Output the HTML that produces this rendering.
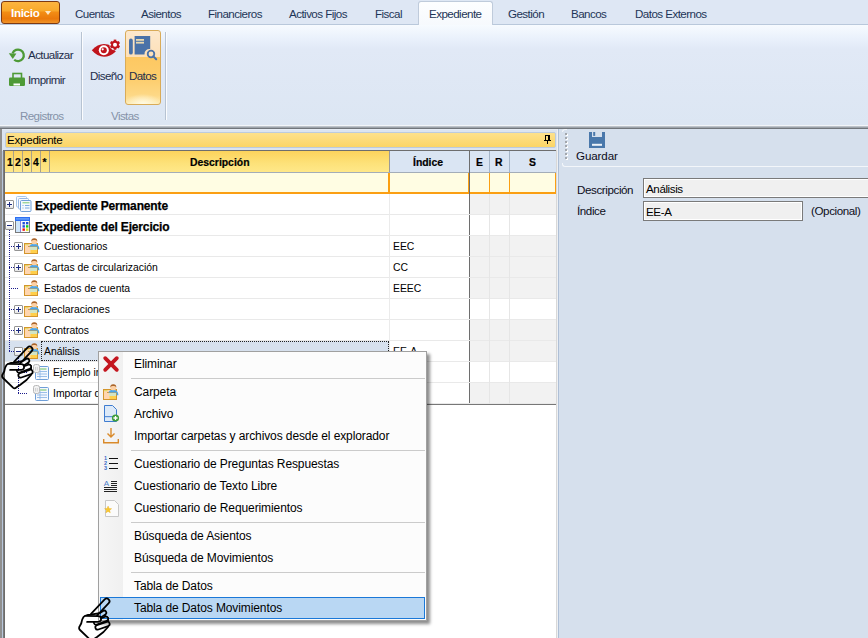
<!DOCTYPE html><html><head><meta charset="utf-8"><style>
*{margin:0;padding:0;box-sizing:border-box}
html,body{width:868px;height:638px;overflow:hidden;background:#d6e0ed;font-family:"Liberation Sans",sans-serif;position:relative}
.a{position:absolute}
.t{position:absolute;white-space:nowrap;line-height:1}
svg{position:absolute;overflow:visible}
.tab{font-size:11.6px;color:#1d3557;letter-spacing:-0.55px;top:7.6px}
.rb{font-size:11.6px;color:#1e2d4a;letter-spacing:-0.6px}
.grp{font-size:11.6px;color:#8592a8;letter-spacing:-0.6px}
.sep{width:1px;background:#b7c3d2;box-shadow:1px 0 0 #fbfcfe}
.hd{font-size:10.4px;font-weight:bold;color:#000;-webkit-text-stroke:0.2px #000}
.row{font-size:10.4px;color:#000;letter-spacing:0}
.bold{font-size:12px;font-weight:bold;color:#000;letter-spacing:-0.15px;-webkit-text-stroke:0.25px #000}
.mi{font-size:12px;color:#000;left:134px;letter-spacing:-0.1px}
.msep{left:131px;width:294px;height:1px;background:#cbcbcb}
.eb{width:9px;height:9px;border:1px solid #949494;border-radius:1px;background:linear-gradient(#fff,#fff 50%,#e2e2e2)}
.lab{font-size:11.6px;color:#0d0d1a;letter-spacing:-0.4px}
</style></head><body>
<svg width="0" height="0" style="position:absolute">
<defs>
<symbol id="folder" viewBox="0 0 16 16">
  <rect x="0.5" y="5.5" width="13" height="10" fill="#ffd6b0" stroke="#d3952c"/>
  <rect x="1" y="6" width="3.5" height="1.2" fill="#e2dc6a"/>
  <rect x="6" y="9" width="7" height="3" fill="#d2e4c4"/>
  <rect x="6.5" y="12" width="6.5" height="3" fill="#ffcf4a"/>
  <path d="M4,8.5 H13.5" stroke="#d3952c" stroke-width="0.9"/>
  <path d="M5.2,9.8 Q5.6,6 10.2,5.8 Q14.6,6 15.3,10 L15.3,11.2 L13.8,11.2 L13.6,8.5 L5.8,8.5 Z" fill="#4aa6ea"/>
  <circle cx="10.3" cy="3.4" r="2.9" fill="#fcd0a4"/>
  <path d="M7.3,3.4 Q7.2,0.2 10.3,0.2 Q13.4,0.2 13.3,3.4 Q12,1.7 10.3,2.1 Q8.6,1.7 7.3,3.4Z" fill="#a9652c"/>
</symbol>
<symbol id="tdoc" viewBox="0 0 16 16">
  <rect x="2.5" y="2.5" width="13" height="13" rx="1" fill="#f4f8fd" stroke="#6f9fd8"/>
  <path d="M5,5 H13.5" stroke="#6cc060" stroke-width="1"/>
  <path d="M4,7.5 H14 M4,10 H14 M4,12.5 H14 M7,6 V14.5" stroke="#8fb7e6" stroke-width="0.9"/>
  <rect x="0.5" y="0.5" width="6" height="8" rx="2" fill="#f2f2f2" stroke="#b8b8b8"/>
  <path d="M2.5,3 V6.5 M4.3,3 V6.5" stroke="#c8c8c8" stroke-width="0.8"/>
</symbol>
<mask id="handmask" maskUnits="userSpaceOnUse" x="0" y="0" width="36" height="48">
  <g stroke-linecap="round" stroke-linejoin="round">
  <line x1="16.5" y1="21.3" x2="29.7" y2="7.3" stroke="#fff" stroke-width="7.3"/>
  <line x1="16.5" y1="21.3" x2="29.7" y2="7.3" stroke="#000" stroke-width="3.8"/>
  <path d="M13.4,20.6 C10,20.9 8,21.4 6.5,23 C5,25 4.6,27 4.2,29.5 L2.8,32 C1.9,33.5 1.9,35 3,36 L13,45.6 C14,46.5 15.2,46.5 16.2,45.6 L20,43 L26.5,38 L31,33 L31,24 L24,19 Z" fill="#000" stroke="#fff" stroke-width="1.8"/>
  <line x1="20.6" y1="33.4" x2="30.4" y2="30" stroke="#fff" stroke-width="6.2"/>
  <line x1="20.6" y1="33.4" x2="30.4" y2="30" stroke="#000" stroke-width="2.8"/>
  <line x1="19" y1="28.5" x2="29" y2="24.8" stroke="#fff" stroke-width="6"/>
  <line x1="19" y1="28.5" x2="29" y2="24.8" stroke="#000" stroke-width="2.6"/>
  <line x1="22.3" y1="22" x2="27.2" y2="18.7" stroke="#fff" stroke-width="5.9"/>
  <line x1="22.3" y1="22" x2="27.2" y2="18.7" stroke="#000" stroke-width="2.5"/>
  <path d="M8.2,21.9 L21.2,22.2 A2.8,2.8 0 0 1 21.4,27.8 L10.1,27.9" fill="#000" stroke="#fff" stroke-width="1.8"/>
  </g>
</mask>
<symbol id="hand" viewBox="0 0 36 48">
  <rect x="0" y="0" width="36" height="48" fill="#000" mask="url(#handmask)"/>
</symbol>
</defs></svg>
<div class="a" style="left:0;top:0;width:868px;height:25px;background:#dee7f4;border-bottom:1px solid #b9c8db"></div>
<div class="a" style="left:1px;top:1px;width:59px;height:23px;border:1px solid #7d3a12;border-radius:3px;background:linear-gradient(#fcb540 0%,#f9aa2c 40%,#f28c14 50%,#ea790b 80%,#f0952a 100%)"></div>
<div class="t" style="left:11px;top:7px;font-size:11.6px;font-weight:bold;color:#fff;letter-spacing:-0.3px">Inicio</div>
<div class="a" style="left:45px;top:11px;width:0;height:0;border-left:3.5px solid transparent;border-right:3.5px solid transparent;border-top:4px solid #fde8c8"></div>
<div class="t tab" style="left:75px">Cuentas</div>
<div class="t tab" style="left:141px">Asientos</div>
<div class="t tab" style="left:208px">Financieros</div>
<div class="t tab" style="left:289px">Activos Fijos</div>
<div class="t tab" style="left:375px">Fiscal</div>
<div class="a" style="left:418px;top:1px;width:75px;height:25px;background:linear-gradient(#fdfeff,#f6f9fd);border:1px solid #bfcbdb;border-bottom:none;border-radius:3px 3px 0 0"></div>
<div class="t tab" style="left:429px">Expediente</div>
<div class="t tab" style="left:508px">Gestión</div>
<div class="t tab" style="left:571px">Bancos</div>
<div class="t tab" style="left:635px">Datos Externos</div>
<div class="a" style="left:0;top:25px;width:868px;height:100px;background:linear-gradient(#f7fbff 0px,#ebf2fc 12px,#e1e9f6 24px,#dce6f3 100px)"></div>
<div class="a sep" style="left:81px;top:32px;height:88px"></div>
<div class="a sep" style="left:165px;top:32px;height:88px"></div>
<svg style="left:8px;top:46px" width="18" height="18" viewBox="0 0 18 18">
<path d="M4.6,7.2 A5.8,5.8 0 1 1 6.2,13.75" fill="none" stroke="#4e9a36" stroke-width="2.3"/>
<path d="M0.8,7.2 L8.4,7.6 L4.8,12.9 Z" fill="#4e9a36"/>
</svg>
<div class="t rb" style="left:28px;top:49px">Actualizar</div>
<svg style="left:9px;top:72px" width="16" height="16" viewBox="0 0 16 16">
<rect x="4" y="1.5" width="8.5" height="6" fill="none" stroke="#4e9a36" stroke-width="1.6"/>
<rect x="0" y="5.5" width="16" height="8.5" rx="1.2" fill="#4e9a36"/>
<rect x="4.5" y="11.5" width="6.5" height="2" fill="#fff"/>
</svg>
<div class="t rb" style="left:28px;top:74px">Imprimir</div>
<div class="t grp" style="left:20px;top:110px">Registros</div>
<svg style="left:91px;top:38px" width="30" height="20" viewBox="0 0 30 20">
<path d="M0.8,12.3 Q6.5,6 13,6 Q17,6 20,7.5 L24.8,13.4 Q19,18.8 13,18.8 Q6.5,18.8 0.8,12.3 Z" fill="#c0141c"/>
<circle cx="12.8" cy="12.2" r="5" fill="#fff"/>
<circle cx="12.8" cy="12.3" r="3.0" fill="#c0141c"/>
<circle cx="11.7" cy="11.3" r="1.1" fill="#fff"/>
<g transform="translate(24,6.7)">
<circle r="5.6" fill="#eef3fa"/>
<circle r="3.9" fill="#c0141c"/>
<g fill="#c0141c"><rect x="-1.3" y="-5.1" width="2.6" height="10.2"/>
<rect x="-1.3" y="-5.1" width="2.6" height="10.2" transform="rotate(60)"/>
<rect x="-1.3" y="-5.1" width="2.6" height="10.2" transform="rotate(120)"/></g>
<circle r="2" fill="#fff"/>
</g>
</svg>
<div class="t rb" style="left:90px;top:70px">Diseño</div>
<div class="a" style="left:125px;top:30px;width:36px;height:75px;border:1px solid #d9ab58;border-radius:3px;background:radial-gradient(ellipse 55% 14% at 50% 100%,#fffbe6 0%,rgba(255,248,210,0) 100%),linear-gradient(#fde8cc 0%,#fde0b8 35%,#fdc862 36%,#fdcd6c 65%,#fdd886 88%,#feeab0 100%)"></div>
<svg style="left:128px;top:35px" width="30" height="26" viewBox="0 0 30 26">
<rect x="1" y="3.6" width="3.8" height="16" rx="1.9" fill="#4a72a8"/>
<path d="M6.6,1 H22.2 V14 A5,5 0 0 0 16.5,19.4 H6.6 Z" fill="#4a72a8"/>
<rect x="8" y="4" width="8" height="1.8" fill="#ead9b0"/>
<rect x="8" y="6.8" width="8" height="1.8" fill="#ead9b0"/>
<circle cx="23" cy="19" r="3.3" fill="none" stroke="#4a72a8" stroke-width="1.8"/>
<path d="M25.3,21.3 L28.2,24.2" stroke="#4a72a8" stroke-width="2" stroke-linecap="round"/>
</svg>
<div class="t rb" style="left:129px;top:70px">Datos</div>
<div class="t grp" style="left:111px;top:110px">Vistas</div>
<div class="a" style="left:0;top:125px;width:868px;height:1px;background:#f2f5f9"></div>
<div class="a" style="left:0;top:126px;width:868px;height:3px;background:linear-gradient(#bcc2c9 0,#bcc2c9 33%,#9da3aa 33%,#9da3aa 66%,#71767c 66%)"></div>
<div class="a" style="left:0;top:129px;width:559px;height:509px;background:#dbe4f0"></div>
<div class="a" style="left:0;top:129px;width:2px;height:509px;background:#909090"></div>
<div class="a" style="left:2px;top:151px;width:1px;height:487px;background:#b7c6db"></div>
<div class="a" style="left:2px;top:129px;width:556px;height:1px;background:#e6ecf4"></div>
<div class="a" style="left:5px;top:132px;width:551px;height:16px;border:1px solid #bccbdd;border-radius:2px;background:linear-gradient(#fde18c,#fbd566)"></div>
<div class="t" style="left:7px;top:134px;font-size:11.6px;color:#000;letter-spacing:-0.25px">Expediente</div>
<svg style="left:544px;top:135px" width="8" height="9" viewBox="0 0 8 9" shape-rendering="crispEdges">
<rect x="1" y="0" width="5" height="1" fill="#000"/>
<rect x="1" y="0" width="1" height="5" fill="#000"/>
<rect x="4" y="0" width="2" height="5" fill="#000"/>
<rect x="0" y="5" width="7" height="1" fill="#000"/>
<rect x="3" y="6" width="1" height="3" fill="#000"/>
</svg>
<div class="a" style="left:3px;top:150px;width:554px;height:488px;background:#fff"></div>
<div class="a" style="left:3px;top:150px;width:2px;height:488px;background:linear-gradient(90deg,#7c7c7c 50%,#6c6c6c 50%)"></div>
<div class="a" style="left:3px;top:150px;width:553px;height:1px;background:#6e6e6e"></div>
<div class="a" style="left:5px;top:151px;width:384px;height:21px;background:linear-gradient(#fcd35c,#fde27a 60%,#ffe889)"></div>
<div class="a" style="left:13px;top:151px;width:1px;height:21px;background:#a9a18a"></div>
<div class="a" style="left:22px;top:151px;width:1px;height:21px;background:#a9a18a"></div>
<div class="a" style="left:31px;top:151px;width:1px;height:21px;background:#a9a18a"></div>
<div class="a" style="left:40px;top:151px;width:1px;height:21px;background:#a9a18a"></div>
<div class="a" style="left:49px;top:151px;width:1px;height:21px;background:#a9a18a"></div>
<div class="a" style="left:389px;top:151px;width:1px;height:21px;background:#999"></div>
<div class="a" style="left:390px;top:151px;width:166px;height:21px;background:#dae5f3"></div>
<div class="a" style="left:489px;top:151px;width:1px;height:21px;background:#a5b5c8"></div>
<div class="a" style="left:509px;top:151px;width:1px;height:21px;background:#a5b5c8"></div>
<div class="a" style="left:5px;top:172px;width:551px;height:1px;background:#a3adb8"></div>
<div class="t hd" style="left:7px;top:158px">1</div>
<div class="t hd" style="left:15px;top:158px">2</div>
<div class="t hd" style="left:24px;top:158px">3</div>
<div class="t hd" style="left:33px;top:158px">4</div>
<div class="t hd" style="left:42.5px;top:158px">*</div>
<div class="t hd" style="left:190px;top:158px">Descripción</div>
<div class="t hd" style="left:413px;top:158px">Índice</div>
<div class="t hd" style="left:476px;top:158px">E</div>
<div class="t hd" style="left:495px;top:158px">R</div>
<div class="t hd" style="left:529px;top:158px">S</div>
<div class="a" style="left:5px;top:173px;width:551px;height:21px;background:#fffde3"></div>
<div class="a" style="left:5px;top:192px;width:551px;height:2px;background:#fb9f12"></div>
<div class="a" style="left:388px;top:173px;width:2px;height:20px;background:#fb9f12"></div>
<div class="a" style="left:468px;top:173px;width:1px;height:20px;background:#fb9f12"></div>
<div class="a" style="left:489px;top:173px;width:1px;height:20px;background:#fb9f12"></div>
<div class="a" style="left:509px;top:173px;width:1px;height:20px;background:#fb9f12"></div>
<div class="a" style="left:555px;top:173px;width:1px;height:20px;background:#fb9f12"></div>
<div class="a" style="left:469px;top:151px;width:1px;height:253px;background:#6e6e6e"></div>
<div class="a" style="left:556px;top:150px;width:1px;height:488px;background:#d8d8d8"></div>
<div class="a" style="left:470px;top:194px;width:86px;height:20px;background:#f2f2f2"></div>
<div class="a" style="left:5px;top:214px;width:551px;height:1px;background:#e9e9e9"></div>
<div class="a" style="left:5px;top:235px;width:551px;height:1px;background:#e9e9e9"></div>
<div class="a" style="left:470px;top:236px;width:86px;height:20px;background:#f2f2f2"></div>
<div class="a" style="left:5px;top:256px;width:551px;height:1px;background:#e9e9e9"></div>
<div class="a" style="left:470px;top:257px;width:86px;height:20px;background:#f2f2f2"></div>
<div class="a" style="left:5px;top:277px;width:551px;height:1px;background:#e9e9e9"></div>
<div class="a" style="left:470px;top:278px;width:86px;height:20px;background:#f2f2f2"></div>
<div class="a" style="left:5px;top:298px;width:551px;height:1px;background:#e9e9e9"></div>
<div class="a" style="left:5px;top:319px;width:551px;height:1px;background:#e9e9e9"></div>
<div class="a" style="left:470px;top:320px;width:86px;height:20px;background:#f2f2f2"></div>
<div class="a" style="left:5px;top:340px;width:551px;height:1px;background:#e9e9e9"></div>
<div class="a" style="left:5px;top:341px;width:384px;height:20px;background:#d7e1ee"></div>
<div class="a" style="left:470px;top:341px;width:86px;height:20px;background:#f2f2f2"></div>
<div class="a" style="left:5px;top:361px;width:551px;height:1px;background:#e9e9e9"></div>
<div class="a" style="left:5px;top:382px;width:551px;height:1px;background:#e9e9e9"></div>
<div class="a" style="left:470px;top:383px;width:86px;height:20px;background:#f2f2f2"></div>
<div class="a" style="left:5px;top:403px;width:551px;height:1px;background:#e9e9e9"></div>
<div class="a" style="left:389px;top:194px;width:1px;height:210px;background:#ebebeb"></div>
<div class="a" style="left:489px;top:194px;width:1px;height:210px;background:#e6e6e6"></div>
<div class="a" style="left:509px;top:194px;width:1px;height:210px;background:#e6e6e6"></div>
<div class="a" style="left:5px;top:404px;width:551px;height:1px;background:#777"></div>
<div class="a" style="left:9px;top:230px;width:1px;height:122px;background:repeating-linear-gradient(#1a1a8c 0 1px,transparent 1px 2px)"></div>
<div class="a" style="left:9px;top:246px;width:5px;height:1px;background:repeating-linear-gradient(90deg,#1a1a8c 0 1px,transparent 1px 2px)"></div>
<div class="a" style="left:9px;top:267px;width:5px;height:1px;background:repeating-linear-gradient(90deg,#1a1a8c 0 1px,transparent 1px 2px)"></div>
<div class="a" style="left:9px;top:309px;width:5px;height:1px;background:repeating-linear-gradient(90deg,#1a1a8c 0 1px,transparent 1px 2px)"></div>
<div class="a" style="left:9px;top:330px;width:5px;height:1px;background:repeating-linear-gradient(90deg,#1a1a8c 0 1px,transparent 1px 2px)"></div>
<div class="a" style="left:9px;top:288px;width:9px;height:1px;background:repeating-linear-gradient(90deg,#1a1a8c 0 1px,transparent 1px 2px)"></div>
<div class="a" style="left:9px;top:351px;width:5px;height:1px;background:repeating-linear-gradient(90deg,#1a1a8c 0 1px,transparent 1px 2px)"></div>
<div class="a" style="left:18px;top:356px;width:1px;height:38px;background:repeating-linear-gradient(#1a1a8c 0 1px,transparent 1px 2px)"></div>
<div class="a" style="left:18px;top:372px;width:9px;height:1px;background:repeating-linear-gradient(90deg,#1a1a8c 0 1px,transparent 1px 2px)"></div>
<div class="a" style="left:18px;top:393px;width:9px;height:1px;background:repeating-linear-gradient(90deg,#1a1a8c 0 1px,transparent 1px 2px)"></div>
<div class="a eb" style="left:5px;top:200px"></div>
<div class="a" style="left:7px;top:204px;width:5px;height:1px;background:#1c2a80"></div>
<div class="a" style="left:9px;top:202px;width:1px;height:5px;background:#1c2a80"></div>
<svg style="left:16px;top:196px" width="16" height="16" viewBox="0 0 16 16">
<rect x="0.5" y="0.5" width="10" height="10.5" rx="1" fill="#f8fbff" stroke="#a8c6ea"/>
<rect x="2.5" y="2.5" width="10" height="10.5" rx="1" fill="#f8fbff" stroke="#98b8e4"/>
<rect x="4.5" y="4.5" width="10.5" height="11" rx="1" fill="#f5f9fe" stroke="#6f9fd8"/>
<path d="M6.5,6.8 H13.5" stroke="#7cc870" stroke-width="1"/>
<path d="M6.5,9.5 H7.5 M9,9.5 H13.5 M6.5,12 H7.5 M9,12 H13.5" stroke="#7aa8e0" stroke-width="1"/>
</svg>
<div class="t bold" style="left:35px;top:200px">Expediente Permanente</div>
<div class="a eb" style="left:5px;top:221px"></div>
<div class="a" style="left:7px;top:225px;width:5px;height:1px;background:#1c2a80"></div>
<svg style="left:15px;top:217px" width="16" height="16" viewBox="0 0 16 16">
<rect x="0.5" y="3" width="14" height="12.5" fill="#fafafa" stroke="#7a7a7a"/>
<rect x="0" y="0" width="15" height="4" fill="#2d6ff2"/>
<rect x="1" y="1.2" width="13" height="1.4" fill="#6aa4fa"/>
<rect x="1" y="4" width="4" height="11" fill="#cfe6fb"/>
<rect x="5" y="4" width="1" height="11" fill="#8a80e0"/>
<rect x="7.5" y="5" width="2.4" height="2.4" fill="#1f4fd8"/>
<rect x="11" y="5" width="2.4" height="2.4" fill="#1f4fd8"/>
<rect x="7.5" y="8.2" width="2.4" height="2.4" fill="#1f4fd8"/>
<rect x="11" y="8.2" width="2.4" height="2.4" fill="#10d010"/>
<rect x="7.5" y="11.4" width="2.4" height="2.4" fill="#ee1010"/>
<rect x="11" y="11.4" width="2.4" height="2.4" fill="#d8e010"/>
</svg>
<div class="t bold" style="left:35px;top:221px">Expediente del Ejercicio</div>
<div class="a eb" style="left:14px;top:242px"></div>
<div class="a" style="left:16px;top:246px;width:5px;height:1px;background:#1c2a80"></div>
<div class="a" style="left:18px;top:244px;width:1px;height:5px;background:#1c2a80"></div>
<svg style="left:24px;top:238px" width="16" height="16"><use href="#folder"/></svg>
<div class="t row" style="left:44px;top:242px">Cuestionarios</div>
<div class="t row" style="left:393px;top:242px">EEC</div>
<div class="a eb" style="left:14px;top:263px"></div>
<div class="a" style="left:16px;top:267px;width:5px;height:1px;background:#1c2a80"></div>
<div class="a" style="left:18px;top:265px;width:1px;height:5px;background:#1c2a80"></div>
<svg style="left:24px;top:259px" width="16" height="16"><use href="#folder"/></svg>
<div class="t row" style="left:44px;top:263px">Cartas de circularización</div>
<div class="t row" style="left:393px;top:263px">CC</div>
<svg style="left:24px;top:280px" width="16" height="16"><use href="#folder"/></svg>
<div class="t row" style="left:44px;top:284px">Estados de cuenta</div>
<div class="t row" style="left:393px;top:284px">EEEC</div>
<div class="a eb" style="left:14px;top:305px"></div>
<div class="a" style="left:16px;top:309px;width:5px;height:1px;background:#1c2a80"></div>
<div class="a" style="left:18px;top:307px;width:1px;height:5px;background:#1c2a80"></div>
<svg style="left:24px;top:301px" width="16" height="16"><use href="#folder"/></svg>
<div class="t row" style="left:44px;top:305px">Declaraciones</div>
<div class="a eb" style="left:14px;top:326px"></div>
<div class="a" style="left:16px;top:330px;width:5px;height:1px;background:#1c2a80"></div>
<div class="a" style="left:18px;top:328px;width:1px;height:5px;background:#1c2a80"></div>
<svg style="left:24px;top:322px" width="16" height="16"><use href="#folder"/></svg>
<div class="t row" style="left:44px;top:326px">Contratos</div>
<div class="a eb" style="left:14px;top:347px"></div>
<div class="a" style="left:16px;top:351px;width:5px;height:1px;background:#1c2a80"></div>
<svg style="left:24px;top:343px" width="16" height="16"><use href="#folder"/></svg>
<div class="t row" style="left:44px;top:347px">Análisis</div>
<div class="t row" style="left:393px;top:347px">EE-A</div>
<div class="a" style="left:41px;top:341px;width:348px;height:20px;border:1px dotted #222"></div>
<svg style="left:33px;top:364px" width="16" height="16"><use href="#tdoc"/></svg>
<div class="t row" style="left:53px;top:368px">Ejemplo importación</div>
<svg style="left:33px;top:385px" width="16" height="16"><use href="#tdoc"/></svg>
<div class="t row" style="left:53px;top:389px">Importar datos</div>
<div class="a" style="left:557px;top:129px;width:1px;height:509px;background:#eef0f3"></div>
<div class="a" style="left:558px;top:129px;width:1px;height:509px;background:#aebfd6"></div>
<div class="a" style="left:565px;top:133px;width:2px;height:2px;background:#a3a7ad;box-shadow:1px 1px 0 #fff"></div>
<div class="a" style="left:565px;top:137px;width:2px;height:2px;background:#a3a7ad;box-shadow:1px 1px 0 #fff"></div>
<div class="a" style="left:565px;top:141px;width:2px;height:2px;background:#a3a7ad;box-shadow:1px 1px 0 #fff"></div>
<div class="a" style="left:565px;top:145px;width:2px;height:2px;background:#a3a7ad;box-shadow:1px 1px 0 #fff"></div>
<div class="a" style="left:565px;top:149px;width:2px;height:2px;background:#a3a7ad;box-shadow:1px 1px 0 #fff"></div>
<div class="a" style="left:565px;top:153px;width:2px;height:2px;background:#a3a7ad;box-shadow:1px 1px 0 #fff"></div>
<div class="a" style="left:565px;top:157px;width:2px;height:2px;background:#a3a7ad;box-shadow:1px 1px 0 #fff"></div>
<div class="a" style="left:565px;top:166px;width:303px;height:1px;background:#f3f6fa"></div>
<div class="a" style="left:562px;top:163px;width:5px;height:4px;border-left:1px solid #f3f6fa;border-bottom:1px solid #f3f6fa;border-bottom-left-radius:3px"></div>
<div class="a" style="left:562px;top:129px;width:5px;height:3px;border-left:1px solid #f3f6fa;border-top:1px solid #f3f6fa;border-top-left-radius:3px"></div>
<svg style="left:589px;top:132px" width="16" height="16" viewBox="0 0 16 16">
<path d="M0,0 H16 V16 H0 Z" fill="#4a78ab"/>
<rect x="3" y="0" width="10" height="5" fill="#d6e0ed"/>
<rect x="4.2" y="0" width="2" height="3.9" fill="#4a78ab"/>
<rect x="3" y="11.8" width="10" height="2" fill="#eef3f8"/>
</svg>
<div class="t lab" style="left:576px;top:150px;letter-spacing:-0.1px">Guardar</div>
<div class="t lab" style="left:577px;top:184px">Descripción</div>
<div class="t lab" style="left:577px;top:205px">Índice</div>
<div class="a" style="left:643px;top:178px;width:240px;height:20px;border:1px solid #7a7a7a;box-shadow:inset 0 0 0 1px #fff;background:#f0f0f0"></div>
<div class="t lab" style="left:646px;top:183px;color:#000">Análisis</div>
<div class="a" style="left:643px;top:201px;width:160px;height:20px;border:1px solid #7a7a7a;box-shadow:inset 0 0 0 1px #fff;background:#f0f0f0"></div>
<div class="t lab" style="left:646px;top:206px;color:#000">EE-A</div>
<div class="t lab" style="left:811px;top:204.5px">(Opcional)</div>
<div class="a" style="left:98px;top:351px;width:329px;height:270px;background:#fcfcfc;border:1px solid #a0a0a0;box-shadow:3px 3px 3px rgba(0,0,0,0.45)"></div>
<div class="a" style="left:99px;top:352px;width:24px;height:268px;background:linear-gradient(90deg,#f6f6f6,#f0f0f0)"></div>
<div class="a" style="left:100px;top:597px;width:325px;height:22px;background:#b9d7f3;border:1px solid #1a78d8"></div>
<div class="t mi" style="top:358px">Eliminar</div>
<div class="a msep" style="top:378px"></div>
<div class="t mi" style="top:386px">Carpeta</div>
<div class="t mi" style="top:408px">Archivo</div>
<div class="t mi" style="top:430px">Importar carpetas y archivos desde el explorador</div>
<div class="a msep" style="top:450px"></div>
<div class="t mi" style="top:458px">Cuestionario de Preguntas Respuestas</div>
<div class="t mi" style="top:480px">Cuestionario de Texto Libre</div>
<div class="t mi" style="top:502px">Cuestionario de Requerimientos</div>
<div class="a msep" style="top:522px"></div>
<div class="t mi" style="top:530px">Búsqueda de Asientos</div>
<div class="t mi" style="top:552px">Búsqueda de Movimientos</div>
<div class="a msep" style="top:572px"></div>
<div class="t mi" style="top:580px">Tabla de Datos</div>
<div class="t mi" style="top:602px">Tabla de Datos Movimientos</div>
<svg style="left:103px;top:356px" width="16" height="16" viewBox="0 0 16 16">
<path d="M2.2,2.2 L13.8,13.8 M13.8,2.2 L2.2,13.8" stroke="#c4161f" stroke-width="3.8" stroke-linecap="round"/>
</svg>
<svg style="left:103px;top:384px" width="16" height="16"><use href="#folder"/></svg>
<svg style="left:104px;top:405px" width="16" height="17" viewBox="0 0 16 17">
<path d="M0.5,0.5 H8.5 L12.5,4.5 V16.5 H0.5 Z" fill="#dce9f8" stroke="#3e7cd0"/>
<rect x="1" y="11" width="11" height="1.2" fill="#5b8fd6"/>
<circle cx="11.5" cy="13" r="3.6" fill="#3f9e3a"/>
<path d="M9.4,13 H13.6 M11.5,10.9 V15.1" stroke="#fff" stroke-width="1.3"/>
</svg>
<svg style="left:103px;top:427px" width="16" height="17" viewBox="0 0 16 17">
<path d="M8,1 V9.5 M4.5,6.5 L8,10 L11.5,6.5" stroke="#d98a2a" stroke-width="1.4" fill="none"/>
<path d="M0.7,12 V15.8 H15.3 V12" stroke="#d98a2a" stroke-width="1.4" fill="none"/>
</svg>
<svg style="left:104px;top:455px" width="16" height="16" viewBox="0 0 16 16">
<text x="0" y="4.8" font-size="5.5" font-family="Liberation Sans" font-weight="bold" fill="#3a6cc8">1</text>
<text x="0" y="9.8" font-size="5.5" font-family="Liberation Sans" font-weight="bold" fill="#3a6cc8">2</text>
<text x="0" y="14.8" font-size="5.5" font-family="Liberation Sans" font-weight="bold" fill="#3a6cc8">3</text>
<path d="M5,3.5 H14 M5,8.5 H14 M5,13.5 H14" stroke="#111" stroke-width="1.1"/>
</svg>
<svg style="left:104px;top:478px" width="16" height="16" viewBox="0 0 16 16">
<text x="-0.3" y="8.2" font-size="8" font-family="Liberation Sans" fill="#4a7cc8">A</text>
<path d="M7,3.5 H13 M7,5.5 H13 M7,7.5 H13 M0,9.5 H13 M0,11.5 H13 M0,13.5 H13" stroke="#222" stroke-width="1"/>
</svg>
<svg style="left:102px;top:500px" width="18" height="17" viewBox="0 0 18 17">
<path d="M3.5,0.5 H12.5 L16.5,4.5 V16.5 H3.5 Z" fill="#fbfbfb" stroke="#c8c8c8"/>
<path d="M6,5 L7.3,8 L10.5,8.3 L8,10.4 L8.8,13.5 L6,11.8 L3.2,13.5 L4,10.4 L1.5,8.3 L4.7,8 Z" fill="#f8c830" stroke="#e8a818" stroke-width="0.5" transform="translate(1.4,2.2) scale(0.78)"/>
</svg>
<svg style="left:0px;top:342px" width="36" height="48" viewBox="0 0 36 48"><use href="#hand"/></svg>
<svg style="left:77px;top:594px" width="36" height="48" viewBox="0 0 36 48"><use href="#hand"/></svg>
</body></html>
